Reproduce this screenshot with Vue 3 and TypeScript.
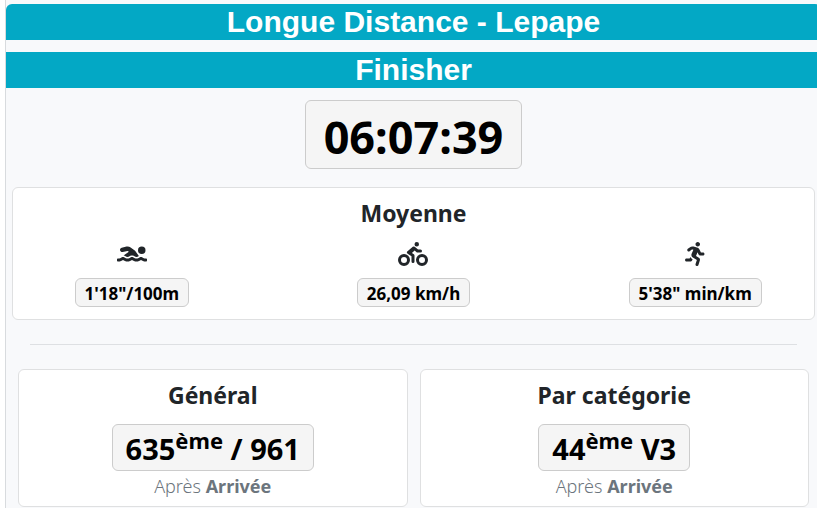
<script setup lang="ts">
interface Average {
  id: string
  value: string
  viewBox: string
  flip: boolean
  path: string
}

interface Ranking {
  title: string
  rank: string
  rest: string
  stage: string
}

const averages: Average[] = [
  {
    id: 'swim',
    value: '1\'18"/100m',
    viewBox: '0 0 640 512',
    flip: true,
    path: 'M189.61 310.58c3.54 3.26 15.27 9.42 34.39 9.42s30.86-6.16 34.39-9.42c16.02-14.77 34.5-22.58 53.46-22.58h16.3c18.96 0 37.45 7.81 53.46 22.58 3.54 3.26 15.27 9.42 34.39 9.42s30.86-6.16 34.39-9.42c14.86-13.71 31.88-21.12 49.39-22.16l-112.84-80.6 18-12.86c3.64-2.58 8.28-3.52 12.62-2.61l100.35 21.53c25.91 5.53 51.44-10.97 57-36.88 5.55-25.92-10.95-51.44-36.88-57L437.68 98.47c-30.73-6.56-63.02.12-88.56 18.38l-80.02 57.17c-10.38 7.39-19.36 16.44-26.72 26.94L173.75 299c5.47 3.23 10.82 6.93 15.86 11.58zM624 352h-16c-26.04 0-45.8-8.42-56.09-17.9-8.9-8.21-19.66-14.1-31.77-14.1h-16.3c-12.11 0-22.87 5.89-31.77 14.1C461.8 343.58 442.04 352 416 352s-45.8-8.42-56.09-17.9c-8.9-8.21-19.66-14.1-31.77-14.1h-16.3c-12.11 0-22.87 5.89-31.77 14.1C269.8 343.58 250.04 352 224 352s-45.8-8.42-56.09-17.9c-8.9-8.21-19.66-14.1-31.77-14.1h-16.3c-12.11 0-22.87 5.89-31.77 14.1C77.8 343.58 58.04 352 32 352H16c-8.84 0-16 7.16-16 16v32c0 8.84 7.16 16 16 16h16c38.62 0 72.72-12.18 96-31.84 23.28 19.66 57.38 31.84 96 31.84s72.72-12.18 96-31.84c23.28 19.66 57.38 31.84 96 31.84s72.72-12.18 96-31.84c23.28 19.66 57.38 31.84 96 31.84h16c8.84 0 16-7.16 16-16v-32c0-8.84-7.16-16-16-16zM112 256a80 80 0 1 0 0-160 80 80 0 0 0 0 160z',
  },
  {
    id: 'bike',
    value: '26,09 km/h',
    viewBox: '0 0 640 512',
    flip: false,
    path: 'M400 96a48 48 0 1 0-48-48 48 48 0 0 0 48 48zm-4 121a31.9 31.9 0 0 0 20 7h64a32 32 0 0 0 0-64h-52.78L356 103a31.94 31.94 0 0 0-40.81.68l-112 96a32 32 0 0 0 3.08 50.92L288 305.12V416a32 32 0 0 0 64 0V288a32 32 0 0 0-14.25-26.62l-41.36-27.57 58.25-49.92zm116 39a128 128 0 1 0 128 128 128 128 0 0 0-128-128zm0 192a64 64 0 1 1 64-64 64 64 0 0 1-64 64zM128 256a128 128 0 1 0 128 128 128 128 0 0 0-128-128zm0 192a64 64 0 1 1 64-64 64 64 0 0 1-64 64z',
  },
  {
    id: 'run',
    value: '5\'38" min/km',
    viewBox: '0 0 416 512',
    flip: false,
    path: 'M272 96c26.51 0 48-21.49 48-48S298.51 0 272 0s-48 21.49-48 48 21.49 48 48 48zM113.69 317.47l-14.8 34.52H32c-17.67 0-32 14.33-32 32s14.33 32 32 32h77.45c19.25 0 36.58-11.44 44.11-29.09l8.79-20.52-10.67-6.3c-17.32-10.23-30.06-25.37-37.99-42.61zM384 223.99h-44.03l-26.06-53.25c-12.5-25.55-35.45-44.23-61.78-50.94l-71.08-21.14c-28.3-6.8-57.77-.55-80.84 17.14l-39.67 30.41c-14.03 10.75-16.69 30.83-5.94 44.86s30.84 16.69 44.86 5.94l39.67-30.41c7.67-5.89 17.44-8 25.27-6.14l14.7 4.37-37.46 87.39c-12.62 29.48-1.31 64.01 26.3 80.31l84.98 50.17-27.47 87.73c-5.28 16.86 4.11 34.82 20.97 40.09 3.19 1 6.41 1.48 9.58 1.48 13.61 0 26.23-8.77 30.52-22.45l31.64-101.06c5.91-20.77-2.89-43.08-21.64-54.39l-61.24-36.14 31.31-78.28 20.27 41.43c8 16.34 24.92 26.89 43.11 26.89H384c17.67 0 32-14.33 32-32s-14.33-31.99-32-31.99z',
  },
]

const rankings: Ranking[] = [
  { title: 'Général', rank: '635', rest: '/ 961', stage: 'Arrivée' },
  { title: 'Par catégorie', rank: '44', rest: 'V3', stage: 'Arrivée' },
]
</script>

<template>
  <div class="page">
    <main class="panel">
      <h1 class="banner banner-top">Longue Distance - Lepape</h1>
      <h2 class="banner">Finisher</h2>
      <div class="total"><span class="badge badge-time">06:07:39</span></div>

      <section class="card averages">
        <h3 class="title">Moyenne</h3>
        <div class="sports">
          <div v-for="a in averages" :key="a.id" class="sport">
            <svg class="icon" :class="{ flip: a.flip }" :viewBox="a.viewBox" aria-hidden="true">
              <path :d="a.path" fill="currentColor" />
            </svg>
            <span class="badge badge-small">{{ a.value }}</span>
          </div>
        </div>
      </section>

      <hr class="rule" />

      <div class="rankings">
        <section v-for="r in rankings" :key="r.title" class="card ranking">
          <h3 class="title">{{ r.title }}</h3>
          <span class="badge badge-rank">{{ r.rank }}<sup>ème</sup> {{ r.rest }}</span>
          <p class="note">Après <strong>{{ r.stage }}</strong></p>
        </section>
      </div>
    </main>
  </div>
</template>

<style>
body {
  margin: 0;
  background: #fff;
}
</style>

<style scoped>
.page {
  overflow: hidden;
  min-height: 100vh;
  font-family: "Noto Sans", "Open Sans", sans-serif;
  color: #212529;
}

.panel {
  box-sizing: border-box;
  width: 100%;
  min-height: 100vh;
  margin-left: 5px;
  padding-top: 4px;
  border: 1px solid #d8dbde;
  border-width: 0 1px;
  background: #f8f9fb;
}

.banner {
  margin: 0 0 12px;
  background: #03a8c5;
  color: #fff;
  font: bold 30px/36px "Liberation Sans", Arial, sans-serif;
  text-align: center;
}

.banner-top {
  border-radius: 6px 6px 0 0;
}

.total {
  display: flex;
  justify-content: center;
  margin-bottom: 18px;
}

.badge {
  box-sizing: border-box;
  border: 1px solid #ccc;
  border-radius: 6px;
  background: #f5f5f5;
  color: #000;
  font-weight: 700;
  text-align: center;
  white-space: nowrap;
}

.badge-time {
  padding: 6px 18px 2px;
  font-size: 45px;
  line-height: 59px;
}

.badge-small {
  padding: 2px 9px 0;
  font-size: 17px;
  line-height: 25px;
}

.badge-rank {
  padding: 2px 13px 0;
  font-size: 29px;
  line-height: 43px;
}

.badge-rank sup {
  position: relative;
  top: -11px;
  font-size: 22px;
  line-height: 0;
  vertical-align: baseline;
}

.card {
  box-sizing: border-box;
  border: 1px solid #dfe0e1;
  border-radius: 6px;
  background: #fff;
}

.title {
  margin: 0 0 16px;
  font-size: 23px;
  font-weight: 700;
  line-height: 26px;
  text-align: center;
}

.averages {
  overflow: hidden;
  margin: 0 6px;
  padding: 12px 0;
}

.sports {
  display: grid;
  grid-template-columns: repeat(3, 1fr);
  margin: 0 -22px;
}

.sport {
  display: flex;
  flex-direction: column;
  align-items: center;
  gap: 12px;
}

.icon {
  display: block;
  height: 24px;
}

.flip {
  transform: scaleX(-1);
}

.rule {
  height: 1px;
  margin: 24px;
  border: 0;
  background: #dee0e3;
}

.rankings {
  display: grid;
  grid-template-columns: 1fr 1fr;
  gap: 12px;
  padding: 0 12px;
}

.ranking {
  display: flex;
  flex-direction: column;
  align-items: center;
  padding: 12px 0 8px;
}

.note {
  margin: 3px 0 0;
  color: #6c757d;
  font-size: 18px;
  font-weight: 300;
  line-height: 24px;
}

.note strong {
  font-weight: 700;
}
</style>
